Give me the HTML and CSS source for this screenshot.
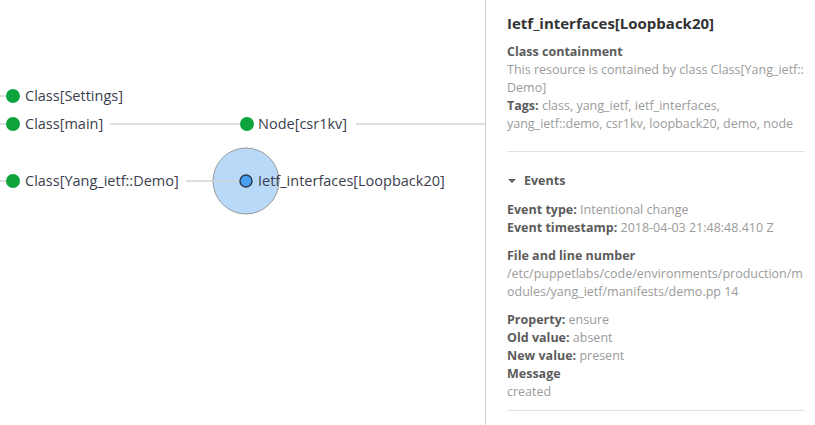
FILE: index.html
```
<!DOCTYPE html>
<html>
<head>
<meta charset="utf-8">
<link rel="stylesheet" href="styles.css">
</head>
<body>
<div class="app">
  <div class="canvas">
    <svg class="graph" width="485" height="425" viewBox="0 0 485 425">
      <g class="edges">
        <line x1="0" y1="96" x2="13" y2="96"/>
        <line x1="0" y1="124" x2="13" y2="124"/>
        <line x1="0" y1="181" x2="13" y2="181"/>
        <line x1="110" y1="124" x2="247" y2="124"/>
        <line x1="356" y1="124" x2="485" y2="124"/>
        <line x1="186" y1="181" x2="246" y2="181"/>
      </g>
      <circle class="halo" cx="246" cy="181" r="33"/>
      <line class="edge-over" x1="213" y1="181" x2="246" y2="181"/>
      <circle class="dot green" cx="13" cy="96" r="7"/>
      <circle class="dot green" cx="13" cy="124" r="7"/>
      <circle class="dot green" cx="13" cy="181" r="7"/>
      <circle class="dot green" cx="247" cy="124" r="7"/>
      <circle class="dot blue" cx="246" cy="181" r="6"/>
      <text class="label" x="25" y="101">Class[Settings]</text>
      <text class="label" x="25" y="129">Class[main]</text>
      <text class="label" x="25" y="186">Class[Yang_ietf::Demo]</text>
      <text class="label" x="258" y="129">Node[csr1kv]</text>
      <text class="label" x="258" y="186">Ietf_interfaces[Loopback20]</text>
    </svg>
  </div>
  <aside class="panel">
    <h1 class="title">Ietf_interfaces[Loopback20]</h1>
    <section class="block">
      <div class="label-b">Class containment</div>
      <div class="muted breakall">This resource is contained by class Class[Yang_ietf::Demo]</div>
      <div><span class="label-b">Tags:</span> <span class="muted">class, yang_ietf, ietf_interfaces, yang_ietf::demo, csr1kv, loopback20, demo, node</span></div>
    </section>
    <hr class="sep">
    <section class="events">
      <div class="events-head"><span class="caret"></span>Events</div>
      <div class="group">
        <div><span class="label-b">Event type:</span> <span class="muted">Intentional change</span></div>
        <div><span class="label-b">Event timestamp:</span> <span class="muted">2018-04-03 21:48:48.410 Z</span></div>
      </div>
      <div class="group">
        <div class="label-b">File and line number</div>
        <div class="muted breakall">/etc/puppetlabs/code/environments/production/modules/yang_ietf/manifests/demo.pp 14</div>
      </div>
      <div class="group">
        <div><span class="label-b">Property:</span> <span class="muted">ensure</span></div>
        <div><span class="label-b">Old value:</span> <span class="muted">absent</span></div>
        <div><span class="label-b">New value:</span> <span class="muted">present</span></div>
        <div class="label-b">Message</div>
        <div class="muted">created</div>
      </div>
    </section>
    <hr class="sep">
  </aside>
</div>
</body>
</html>
```
FILE: styles.css
```
* { box-sizing: border-box; }
html, body { margin: 0; padding: 0; background: #fff; }
body { font-family: "Open Sans", sans-serif; width: 815px; height: 425px; overflow: hidden; }
.app { display: grid; grid-template-columns: 485px 330px; height: 425px; }
.canvas { position: relative; overflow: hidden; }
.graph { display: block; }
.edges line, .edge-over { stroke: #dedede; stroke-width: 2; }
.edge-over { stroke: #c9d6e3; }
.halo { fill: #b8d9f8; stroke: #9a9a9a; stroke-width: 1; }
.dot.green { fill: #0fa33d; }
.dot.blue { fill: #4aa0f0; stroke: #2d3e50; stroke-width: 1.5; }
.label { font-family: "Open Sans", sans-serif; font-size: 14.5px; fill: #3b3e4e; }
.panel { border-left: 1px solid #d0d0d0; padding: 13px 10px 0 21px; font-size: 12.5px; line-height: 18px; color: #5c5c5c; }
.title { margin: 0 0 9px; font-size: 15px; line-height: 21px; font-weight: 700; color: #333; }
.label-b { font-weight: 700; color: #5c5c5c; }
.muted { color: #9b9b9b; }
.sep { border: 0; border-top: 1px solid #e2e2e2; margin: 0; }
.block { padding-bottom: 18px; }
.events { padding-top: 20px; padding-bottom: 9px; }
.events-head { font-weight: 700; color: #5c5c5c; display: flex; align-items: center; margin-bottom: 11px; }
.caret { width: 0; height: 0; border-left: 4px solid transparent; border-right: 4px solid transparent; border-top: 4px solid #5c5c5c; margin: 0 8px 0 1px; }
.group { margin-bottom: 10px; }
.group:last-child { margin-bottom: 0; }
.breakall { word-break: break-all; }
```
